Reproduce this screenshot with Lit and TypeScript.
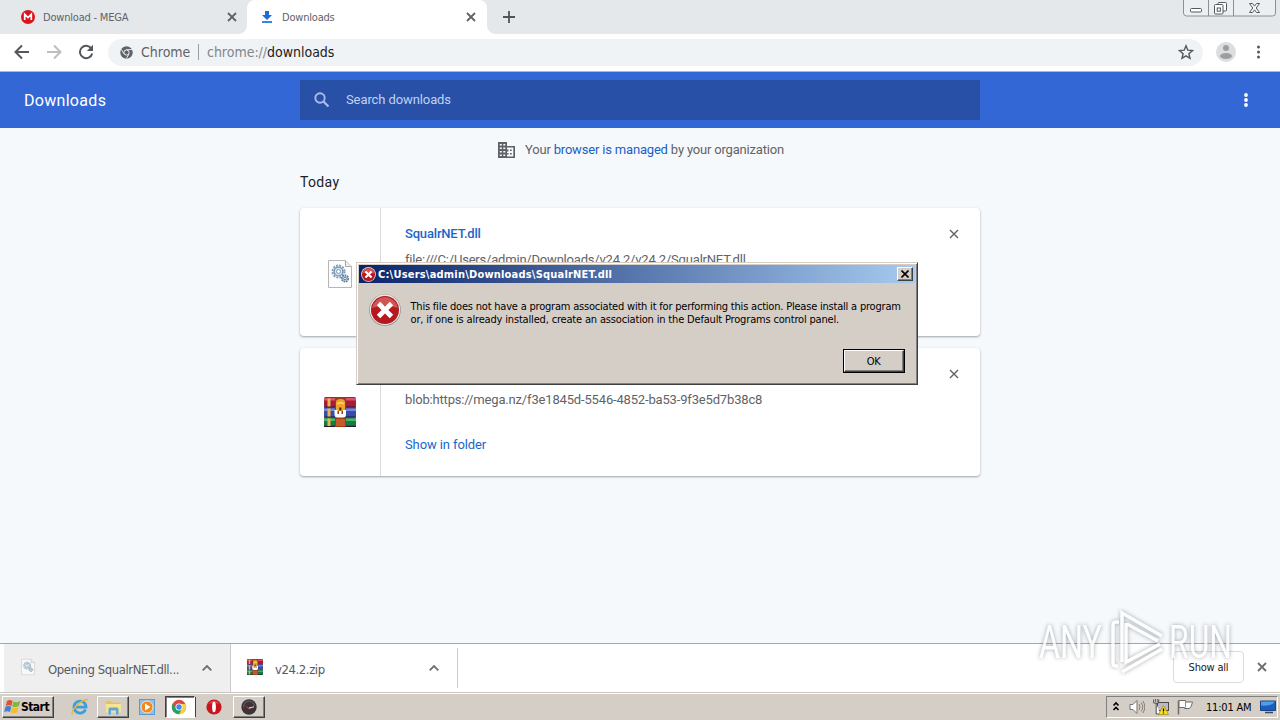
import { LitElement, html, svg, css, nothing } from 'lit';
import { customElement, property } from 'lit/decorators.js';

// WinRAR style stack of books, shared by the list and the shelf
const rarIcon = svg`
  <rect x="0" y="0" width="32" height="10" rx="1.5" fill="#a81c3a"/>
  <rect x="0" y="1" width="32" height="2.5" fill="#d9536b"/>
  <rect x="0" y="10.5" width="32" height="9.5" rx="1" fill="#3a4ba8"/>
  <rect x="0" y="11.5" width="32" height="2.5" fill="#7488d8"/>
  <rect x="0" y="20.5" width="32" height="9.5" rx="1.5" fill="#187a41"/>
  <rect x="0" y="21.5" width="32" height="2.5" fill="#4bb573"/>
  <path d="M0 10.200h32M0 20.200h32M0 29.300h32" stroke="#2b1730" stroke-width="1.200"/>
  <path d="M3.500 1.500h3v8h-3zM3.500 11.500h3v8h-3zM3.500 21.500h3v7.500h-3z" fill="#e8b64a"/>
  <rect x="11" y="0" width="11" height="30" fill="#9c3b16"/>
  <path d="M12 22h9v7h-9z" fill="#c8592a"/>
  <path d="M12 14V5q0-3 4.500-3t4.500 3v9z" fill="#eda32c"/>
  <path d="M13 7q3.500-2.500 7 0" fill="none" stroke="#fbd776" stroke-width="1.500"/>
  <path d="M10.500 13v4.500q0 3 3 3h5.500q3 0 3-3V13h-3v4h-1.500v-3h-2.500v3h-1.500v-4z" fill="#fff"/>
  <rect x="15.300" y="10.500" width="2" height="3" fill="#402010"/>`;

const dllIcon = svg`
  <path d="M.5.5h17l6 6v21H.5z" fill="#fdfdfd" stroke="#b4b6b8"/>
  <path d="M17.500.5v6h6" fill="#e9ecef" stroke="#a9abad"/>
  <circle cx="10.500" cy="11.500" r="6" fill="none" stroke="#7f9fba" stroke-width="2" stroke-dasharray="2 1.140"/>
  <circle cx="10.500" cy="11.500" r="4.400" fill="#d2e5f2" stroke="#7595b0" stroke-width="1.400"/>
  <circle cx="10.500" cy="11.500" r="2" fill="#fff" stroke="#7c9cb8"/>
  <circle cx="17" cy="18.500" r="3.200" fill="#c3dcec" stroke="#587b9a" stroke-width="1.700" stroke-dasharray="1.600 .8"/>
  <circle cx="17" cy="18.500" r="1.300" fill="#fff" stroke="#557b9b"/>`;

const errorIcon = svg`
  <circle cx="16" cy="16" r="15.800" fill="#8b8b8b"/>
  <circle cx="16" cy="15.700" r="15.200" fill="#f0e9e7"/>
  <circle cx="16" cy="16" r="14" fill="#b5191f"/>
  <path d="M3 14a13.200 13.200 0 0 1 26 0q-13-5-26 0z" fill="#d05654"/>
  <path d="M9.500 9.500l13 13M22.500 9.500l-13 13" stroke="#fff" stroke-width="4.800"/>`;

const closePath = svg`<path d="M1 1l8 8M9 1l-8 8" fill="none" stroke="currentColor"/>`;

@customElement('download-card')
export class DownloadCard extends LitElement {
  static styles = css`
    :host {
      display: flex;
      height: 128px;
      box-sizing: border-box;
      background: #fff;
      border-radius: 4px;
      box-shadow: 0 1px 2px rgba(60, 64, 67, 0.35), 0 1px 3px rgba(60, 64, 67, 0.15);
      font: 13px/20px Roboto, sans-serif;
    }
    .icon {
      width: 80px;
      border-right: 1px solid #d8dadc;
      display: flex;
      align-items: center;
      justify-content: center;
    }
    .icon svg {
      overflow: visible;
    }
    .dll {
      padding-top: 3px;
    }
    .content {
      flex: 1;
      padding: 16px 0 0 24px;
      display: flex;
      flex-direction: column;
      align-items: flex-start;
    }
    .name {
      color: #1a66c9;
      font-weight: 500;
      letter-spacing: -0.18px;
    }
    .url {
      color: #5f6368;
      margin-top: 6px;
      letter-spacing: -0.2px;
    }
    .zip + .content .url {
      letter-spacing: -0.165px;
    }
    .action {
      color: #1a66c9;
      margin-top: 25px;
      letter-spacing: -0.1px;
    }
    .close {
      width: 10px;
      height: 10px;
      margin: 21px 21px 0 0;
      color: #5f6368;
      stroke-width: 1.4;
    }
  `;

  @property() kind = 'dll';
  @property() name = '';
  @property() url = '';
  @property() action = '';

  render() {
    return html`
      <div class="icon ${this.kind}">
        ${this.kind === 'dll'
          ? html`<svg width="24" height="28" viewBox="0 0 24 28">${dllIcon}</svg>`
          : html`<svg width="32" height="30" viewBox="0 0 32 30">${rarIcon}</svg>`}
      </div>
      <div class="content">
        <span class="name">${this.name}</span>
        <span class="url">${this.url}</span>
        ${this.action ? html`<span class="action">${this.action}</span>` : nothing}
      </div>
      <svg class="close" viewBox="0 0 10 10">${closePath}</svg>
    `;
  }
}

@customElement('error-dialog')
export class ErrorDialog extends LitElement {
  static styles = css`
    :host {
      display: block;
      box-sizing: border-box;
      width: 562px;
      height: 123px;
      background: #d5cec7;
      border: 1px solid;
      border-color: #d5cec7 #404040 #404040 #d5cec7;
      box-shadow: inset 1px 1px #fff, inset -1px -1px #808080;
      padding: 2px;
      font: 11px/13px "DejaVu Sans Condensed", "DejaVu Sans", sans-serif;
      font-stretch: condensed;
      color: #000;
    }
    .title {
      height: 18px;
      display: flex;
      align-items: center;
      padding: 0 2px;
      background: linear-gradient(90deg, #0a246a, #a6caf0);
      color: #fff;
      font-weight: bold;
    }
    .title span {
      flex: 1;
      margin-left: 2px;
      letter-spacing: 0.2px;
      white-space: nowrap;
    }
    .title button {
      width: 16px;
      height: 14px;
    }
    button {
      box-sizing: border-box;
      display: flex;
      align-items: center;
      justify-content: center;
      padding: 0;
      background: #d5cec7;
      border: 1px solid;
      border-color: #fff #404040 #404040 #fff;
      box-shadow: inset -1px -1px #808080;
      font: inherit;
    }
    .body {
      display: flex;
      padding: 11px 0 0 10px;
    }
    .message {
      margin: 6px 0 0 9.5px;
      white-space: nowrap;
    }
    .first {
      letter-spacing: -0.205px;
    }
    .second {
      letter-spacing: -0.17px;
    }
    .actions {
      display: flex;
      justify-content: flex-end;
      padding: 23px 10px 0 0;
    }
    .ok {
      border: 1px solid #000;
    }
    .ok button {
      width: 60px;
      height: 22px;
      letter-spacing: -0.4px;
      padding-right: 1px;
    }
  `;

  render() {
    return html`
      <div class="title">
        <svg width="15" height="15" viewBox="0 0 32 32">${errorIcon}</svg>
        <span>C:\\Users\\admin\\Downloads\\SqualrNET.dll</span>
        <button>
          <svg width="8" height="8" viewBox="0 0 8 8"><path d="M.5.5l7 7M7.500.5l-7 7" stroke="#000" stroke-width="1.600"/></svg>
        </button>
      </div>
      <div class="body">
        <svg width="32" height="32" viewBox="0 0 32 32">${errorIcon}</svg>
        <div class="message">
          <div class="first">This file does not have a program associated with it for performing this action. Please install a program</div>
          <div class="second">or, if one is already installed, create an association in the Default Programs control panel.</div>
        </div>
      </div>
      <div class="actions"><div class="ok"><button>OK</button></div></div>
    `;
  }
}

@customElement('task-bar')
export class TaskBar extends LitElement {
  static styles = css`
    :host {
      display: flex;
      align-items: center;
      box-sizing: border-box;
      height: 28px;
      padding: 1px 2px 0;
      background: #d5cec7;
      border-top: 1px solid #c9c5bf;
      box-shadow: inset 0 1px #fff;
      font: 11px/14px "DejaVu Sans Condensed", "DejaVu Sans", sans-serif;
      font-stretch: condensed;
      color: #000;
    }
    .button, .slot {
      box-sizing: border-box;
      height: 22px;
      width: 32px;
      display: flex;
      align-items: center;
      justify-content: center;
    }
    .button {
      border: 1px solid;
      border-color: #fff #404040 #404040 #fff;
      box-shadow: inset -1px -1px #808080;
    }
    .start {
      width: 52px;
      font-weight: bold;
      font-size: 12px;
      letter-spacing: -0.5px;
      margin-right: 9px;
      padding-right: 3px;
    }
    .slot {
      width: 34px;
    }
    .slot.player {
      padding-left: 1px;
    }
    .slot.last {
      width: 37px;
      padding-right: 1px;
    }
    .pressed {
      width: 30px;
      margin-left: 2px;
      padding-right: 2px;
      background: #fff;
      border-color: #404040 #fff #fff #404040;
      box-shadow: inset 1px 1px #808080;
    }
    .grip {
      width: 1px;
      height: 20px;
      background: #404040;
    }
    .tray {
      margin-left: auto;
      box-sizing: border-box;
      width: 172px;
      height: 22px;
      display: flex;
      align-items: center;
      border: 1px solid;
      border-color: #808080 #fff #fff #808080;
      padding-left: 5px;
    }
    .tray span {
      letter-spacing: -0.2px;
      white-space: nowrap;
      width: 46px;
      margin: 1px 8px 0 13px;
    }
    .speaker {
      margin-left: 9px;
    }
    .network {
      margin-left: 8px;
    }
    .flag {
      margin-left: 8px;
    }
  `;

  render() {
    return html`
      <div class="button start">
        <svg width="17" height="16" viewBox="0 0 17 16">
          <path d="M3 2q3-2 5.500 0L7.500 7Q5 5.500 1.800 7z" fill="#e2522a"/>
          <path d="M9.300 2.500q3 1.600 7-.5l-1.500 5q-3 1.800-6.500.5z" fill="#7cb83b"/>
          <path d="M1.500 7.800q3-1.600 5.700 0L6 13Q3.500 11.500.2 13z" fill="#3e7fd0"/>
          <path d="M8 8.200q3 1.500 6.500 0l-1.400 5.300q-3 1.600-6.500 0z" fill="#f4bd2c"/>
        </svg>
        Start
      </div>
      <div class="slot">
        <svg width="18" height="18" viewBox="0 0 18 18">
          <path d="M14.500 11.500A6 6 0 1 1 15 9.200H5" fill="none" stroke="#3c9fdc" stroke-width="2.800"/>
          <path d="M1.500 16.500C-1 13 10 1 17 1.500q-2 0-4 1" fill="none" stroke="#e9b83a" stroke-width="1.400"/>
        </svg>
      </div>
      <div class="button">
        <svg width="17" height="16" viewBox="0 0 17 16">
          <path d="M1 2h5l1 1.500h8.500V13H1z" fill="#e6c25c"/>
          <path d="M1 5h15v8.500H1z" fill="#f8e38f"/>
          <path d="M3.500 15.500V10q0-1.500 1.500-1.500h7q1.500 0 1.500 1.500v5.500h-2.500V11.500H6v4z" fill="#5aa9d8"/>
        </svg>
      </div>
      <div class="slot player">
        <svg width="16" height="16" viewBox="0 0 16 16">
          <rect x=".5" y=".5" width="15" height="15" fill="#8cc0ea" stroke="#5a9bd2"/>
          <circle cx="8" cy="8" r="6" fill="#f08a1c" stroke="#fde3c0"/>
          <path d="M6 4.500v7L11.500 8z" fill="#fff"/>
        </svg>
      </div>
      <div class="button pressed">
        <svg width="16" height="16" viewBox="0 0 16 16">
          <circle cx="8" cy="8" r="7.200" fill="#dd4b3e"/>
          <path d="M1.800 4.400A7.200 7.200 0 0 0 8 15.200L11 9.700 5 9.700z" fill="#1fa463"/>
          <path d="M14.500 5A7.200 7.200 0 0 1 8 15.200L11.300 9 10 5z" fill="#ffcd40"/>
          <circle cx="8" cy="8" r="3.500" fill="#fff"/>
          <circle cx="8" cy="8" r="2.700" fill="#4285f4"/>
        </svg>
      </div>
      <div class="grip"></div>
      <div class="slot last">
        <svg width="16" height="16" viewBox="0 0 16 16">
          <ellipse cx="8" cy="8" rx="7.600" ry="7.600" fill="#c8161d"/>
          <path d="M2 5q6-7 12 0-6-2-12 0z" fill="#e04a47"/>
          <ellipse cx="8" cy="8" rx="1.900" ry="5.300" fill="#fff"/>
        </svg>
      </div>
      <div class="button">
        <svg width="16" height="16" viewBox="0 0 16 16">
          <circle cx="8" cy="8" r="7.700" fill="#3a3438"/>
          <path d="M2.500 8.500A5.500 5.500 0 0 1 13.500 7" fill="none" stroke="#5f585e" stroke-width="1.300"/>
          <path d="M3 6l5 3 5-1.200-5 2.400z" fill="#e34a3e"/>
          <path d="M8 9l5-1.200" stroke="#ddd"/>
        </svg>
      </div>
      <div class="tray">
        <svg width="8" height="13" viewBox="0 0 8 13"><path d="M1.500 4.500L4 2l2.500 2.500M1.500 9L4 6.500 6.500 9" fill="none" stroke="#000" stroke-width="1.600"/></svg>
        <svg class="speaker" width="16" height="16" viewBox="0 0 16 16">
          <path d="M1 5.500h3L8 1.500v13l-4-4H1z" fill="#fff" stroke="#77736e"/>
          <path d="M10 5q2 3 0 6M12 3.500q3.500 4.500 0 9M14 2q3.500 6 0 12" fill="none" stroke="#85817b"/>
        </svg>
        <svg class="network" width="16" height="16" viewBox="0 0 16 16">
          <rect x="4.500" y="3.500" width="11" height="8" fill="#b9bbc0" stroke="#494949"/>
          <path d="M.7.5v3.500h5V.5M2.300 0v3M4.200 0v3M3.200 4v11h4" fill="#fff" stroke="#494949"/>
          <path d="M10.500 6.500l5 9h-10z" fill="#ffe21f" stroke="#9b8720" stroke-width=".7"/>
          <path d="M10.500 9.500v3M10.500 13.500v1" stroke="#000" stroke-width="1.300"/>
        </svg>
        <svg class="flag" width="16" height="16" viewBox="0 0 16 16">
          <path d="M1.500 15.500v-14" stroke="#6f6b66" stroke-width="1.500"/>
          <path d="M2 1.500h6.500v1.500h7q-1 5-3 6.500h-5V8.500H2z" fill="#fff" stroke="#6f6b66"/>
          <path d="M8.500 2v6.500" stroke="#8f8b86"/>
        </svg>
        <span>11:01 AM</span>
        <svg width="16" height="14" viewBox="0 0 16 14">
          <path d="M.5 1h15v9.500H.5z" fill="#1a5fc0" stroke="#174382"/>
          <path d="M1 1.500h14q-3 5-14 4z" fill="#4f9de6"/>
          <path d="M5 12.500h8" stroke="#39485c" stroke-width="1.500"/>
        </svg>
      </div>
    `;
  }
}

@customElement('app-root')
export class AppRoot extends LitElement {
  static styles = css`
    :host {
      display: flex;
      flex-direction: column;
      position: relative;
      width: 1280px;
      height: 720px;
      overflow: hidden;
      background: #f6f9fc;
      font-family: Roboto, sans-serif;
      --ui-font: "DejaVu Sans Condensed", "DejaVu Sans", sans-serif;
    }
    svg {
      flex: none;
    }
    .tabs {
      height: 34px;
      flex: none;
      display: flex;
      background: #e4e8eb;
      font: 11px/14px var(--ui-font);
      font-stretch: condensed;
      color: #5f6368;
      letter-spacing: -0.2px;
    }
    .tab {
      box-sizing: border-box;
      display: flex;
      align-items: center;
      height: 34px;
      width: 240px;
      padding: 0 11px 0 13px;
    }
    .tab span {
      flex: 1;
      margin-left: 8px;
      padding-top: 2px;
    }
    .tab.first {
      width: 247px;
      padding: 0 10px 0 21px;
    }
    .tab.active {
      position: relative;
      background: #fff;
      border-radius: 8px 8px 0 0;
    }
    .tab.active::before, .tab.active::after {
      content: '';
      position: absolute;
      bottom: 0;
      width: 8px;
      height: 8px;
    }
    .tab.active::before {
      left: -8px;
      background: radial-gradient(circle at 0 0, transparent 7.5px, #fff 8px);
    }
    .tab.active::after {
      right: -8px;
      background: radial-gradient(circle at 100% 0, transparent 7.5px, #fff 8px);
    }
    .tab .x {
      color: #5f6368;
      stroke-width: 1.8;
    }
    .new {
      align-self: center;
      margin-left: 16px;
    }
    .window {
      margin: 0 4px 0 auto;
    }
    .toolbar {
      box-sizing: border-box;
      height: 38px;
      flex: none;
      display: flex;
      align-items: center;
      background: #fff;
      border-bottom: 1px solid #aeb9cc;
      padding: 0 14px 2px;
      font: 14px/18px var(--ui-font);
      font-stretch: condensed;
    }
    .nav {
      display: flex;
      gap: 16px;
      width: 94px;
    }
    .omnibox {
      box-sizing: border-box;
      flex: none;
      width: 1095px;
      height: 27px;
      margin-top: 1px;
      border-radius: 14px;
      background: #f0f3f5;
      display: flex;
      align-items: center;
      padding: 0 9px 0 12px;
      color: #5f6368;
    }
    .omnibox .origin {
      margin-left: 8px;
      width: 49px;
    }
    .omnibox .bar {
      width: 1px;
      height: 16px;
      background: #9a9da1;
      margin: 0 8px;
    }
    .omnibox .address {
      flex: 1;
      color: #80868b;
      letter-spacing: -0.02px;
    }
    .address b {
      font-weight: normal;
      color: #202124;
    }
    .avatar {
      margin-left: 13px;
    }
    .menu {
      margin-left: 20px;
    }
    header {
      box-sizing: border-box;
      height: 56px;
      flex: none;
      display: flex;
      align-items: center;
      background: #3367d6;
      padding: 0 32px 0 24px;
      color: #fff;
    }
    header h1 {
      margin: 0;
      width: 276px;
      padding-top: 2px;
      font: 400 16px/20px Roboto, sans-serif;
      letter-spacing: 0.3px;
    }
    .search {
      box-sizing: border-box;
      width: 680px;
      height: 40px;
      display: flex;
      align-items: center;
      gap: 16px;
      padding-left: 14px;
      background: #2850a7;
      color: #c0d0f2;
      font-size: 13px;
      letter-spacing: -0.1px;
    }
    .search span {
      padding-bottom: 2px;
    }
    header .dots {
      margin-left: auto;
    }
    main {
      flex: 1;
      width: 680px;
      margin: 0 auto;
    }
    .managed {
      display: flex;
      align-items: center;
      justify-content: center;
      gap: 10px;
      height: 44px;
      padding-left: 2px;
      color: #5f6368;
      font-size: 13px;
      letter-spacing: -0.18px;
    }
    .managed span {
      padding-bottom: 2px;
    }
    .managed a {
      color: #1a5fc4;
    }
    h2 {
      margin: 0;
      padding-bottom: 16px;
      font: 400 14px/20px Roboto, sans-serif;
      letter-spacing: 0.35px;
      color: #202124;
    }
    .list {
      display: flex;
      flex-direction: column;
      gap: 12px;
    }
    .shelf {
      box-sizing: border-box;
      height: 49px;
      flex: none;
      display: flex;
      align-items: center;
      background: #fff;
      border-top: 1px solid #a5a7aa;
      padding-left: 4px;
      font: 13px/16px var(--ui-font);
      font-stretch: condensed;
      color: #555a60;
    }
    .item {
      box-sizing: border-box;
      width: 227px;
      height: 40px;
      display: flex;
      align-items: center;
      padding: 2px 18px 0 16px;
      border-right: 1px solid #c8cacc;
    }
    .item span {
      flex: 1;
      margin-left: 12px;
      padding-top: 2px;
      letter-spacing: -0.42px;
      white-space: nowrap;
    }
    .item.opening {
      height: 48px;
      background: #efefef;
    }
    .item svg:first-child {
      margin-bottom: 5px;
    }
    .item svg:last-child {
      margin-bottom: 3px;
    }
    .file {
      opacity: 0.7;
    }
    .all {
      box-sizing: border-box;
      width: 71px;
      height: 32px;
      margin: 0 0 2px auto;
      border: 1px solid #dadce0;
      border-radius: 4px;
      display: flex;
      align-items: center;
      justify-content: center;
      padding-top: 2px;
      font-size: 11px;
      letter-spacing: -0.2px;
      color: #202124;
    }
    .shelf .x {
      margin: 0 13px 2px;
      color: #6b6f73;
      stroke-width: 1.8;
    }
    error-dialog {
      position: absolute;
      left: 356px;
      top: 262px;
    }
    .watermark {
      position: absolute;
      left: 1034px;
      top: 604px;
      overflow: visible;
      filter: drop-shadow(0 0 2px rgba(80, 85, 90, 0.7));
      opacity: 0.75;
      font: 400 47px Roboto, sans-serif;
    }
  `;

  render() {
    return html`
      <div class="tabs">
        <div class="tab first">
          <svg width="14" height="14" viewBox="0 0 14 14">
            <circle cx="7" cy="7" r="7" fill="#d9141c"/>
            <path d="M3.700 10V4.300L7 7.600l3.300-3.300V10" fill="none" stroke="#fff" stroke-width="1.700"/>
          </svg>
          <span>Download - MEGA</span>
          <svg class="x" width="10" height="10" viewBox="0 0 10 10">${closePath}</svg>
        </div>
        <div class="tab active">
          <svg width="14" height="14" viewBox="0 0 14 14">
            <path d="M5 1h4v4h3l-5 5-5-5h3z" fill="#1b6ddc"/>
            <path d="M2 12h10" stroke="#1b6ddc" stroke-width="1.700"/>
          </svg>
          <span>Downloads</span>
          <svg class="x" width="10" height="10" viewBox="0 0 10 10">${closePath}</svg>
        </div>
        <svg class="new" width="12" height="12" viewBox="0 0 12 12"><path d="M6 0v12M0 6h12" stroke="#505458" stroke-width="1.800"/></svg>
        <svg class="window" width="93" height="18" viewBox="0 0 93 18">
          <path d="M.5 0v13q0 3 3 3h86q3 0 3-3V0M25.500 0v16M50.500 0v16" fill="#eceff2" stroke="#8b9095"/>
          <rect x="7.500" y="8.500" width="11" height="3.500" rx="1" fill="#fff" stroke="#55595e"/>
          <rect x="35" y="2.500" width="8.500" height="8.500" rx="1" fill="#fff" stroke="#55595e"/>
          <rect x="31.500" y="4.500" width="8.500" height="9.500" rx="1" fill="#fff" stroke="#55595e"/>
          <rect x="34.200" y="8" width="3.200" height="3.200" fill="none" stroke="#55595e"/>
          <path d="M66.500 3.500h3l2 2.700 2-2.700h3l-3.300 4.500 3.300 4.500h-3l-2-2.700-2 2.700h-3l3.300-4.500z" fill="#fff" stroke="#55595e"/>
        </svg>
      </div>

      <div class="toolbar">
        <div class="nav">
          <svg width="16" height="16" viewBox="0 0 16 16"><path d="M15 8H2M8 1.500L1.500 8 8 14.500" fill="none" stroke="#54585c" stroke-width="2"/></svg>
          <svg width="16" height="16" viewBox="0 0 16 16"><path d="M1 8h13M8 1.500L14.500 8 8 14.500" fill="none" stroke="#bcbec0" stroke-width="2"/></svg>
          <svg width="16" height="16" viewBox="0 0 16 16">
            <path d="M13.300 4.500A6.200 6.200 0 1 0 14.200 9.500" fill="none" stroke="#54585c" stroke-width="2"/>
            <path d="M15 .8V7H8.800z" fill="#54585c"/>
          </svg>
        </div>
        <div class="omnibox">
          <svg width="13" height="13" viewBox="0 0 13 13">
            <circle cx="6.500" cy="6.500" r="6.200" fill="#5f6368"/>
            <circle cx="6.500" cy="6.500" r="2.600" fill="#5f6368" stroke="#f0f3f5"/>
            <path d="M6.500 3.600h5.500M4 8L1.300 3.300M9 8l-2.700 4.600" stroke="#f0f3f5" stroke-width=".9"/>
          </svg>
          <span class="origin">Chrome</span>
          <span class="bar"></span>
          <span class="address">chrome://<b>downloads</b></span>
          <svg width="16" height="16" viewBox="0 0 16 16"><path d="M8 1.800l1.800 4.400 4.700.4-3.600 3.100 1.100 4.600L8 11.800l-4 2.500 1.100-4.600L1.500 6.600l4.700-.4z" fill="none" stroke="#54585c" stroke-width="1.400"/></svg>
        </div>
        <svg class="avatar" width="20" height="20" viewBox="0 0 20 20">
          <circle cx="10" cy="10" r="10" fill="#dcdddf"/>
          <circle cx="10" cy="6" r="3" fill="#9c9ea0"/>
          <ellipse cx="10" cy="14" rx="6" ry="3" fill="#9c9ea0"/>
        </svg>
        <svg class="menu" width="4" height="14" viewBox="0 0 4 14"><circle cx="2.500" cy="2" r="1.500" fill="#54585c"/><circle cx="2.500" cy="7" r="1.500" fill="#54585c"/><circle cx="2.500" cy="12" r="1.500" fill="#54585c"/></svg>
      </div>

      <header>
        <h1>Downloads</h1>
        <div class="search">
          <svg width="16" height="16" viewBox="0 0 16 16"><circle cx="6" cy="6" r="4.700" fill="none" stroke="#a9bdea" stroke-width="1.900"/><path d="M9.500 9.500l5 5" stroke="#a9bdea" stroke-width="2.200"/></svg>
          <span>Search downloads</span>
        </div>
        <svg class="dots" width="4" height="14" viewBox="0 0 4 14"><circle cx="2" cy="2" r="1.900" fill="#fff"/><circle cx="2" cy="7" r="1.900" fill="#fff"/><circle cx="2" cy="12" r="1.900" fill="#fff"/></svg>
      </header>

      <main>
        <div class="managed">
          <svg width="17" height="16" viewBox="0 0 17 16">
            <path d="M0 0h9v4h8v12H0z" fill="#5f6368"/>
            <path d="M1.800 2h2v1.500h-2zM5.300 2h2v1.500h-2zM1.800 5.500h2V7h-2zM5.300 5.500h2V7h-2zM1.800 9h2v1.500h-2zM5.300 9h2v1.500h-2zM1.800 12.500h2V14h-2zM5.300 12.500h2V14h-2zM9 5.500h6.300v9H9v-2h1.500V11H9V9.500h1.500V7.500H9z" fill="#f6f9fc"/>
            <path d="M12 7.500h1.700V9H12zM12 11h1.700v1.500H12z" fill="#5f6368"/>
          </svg>
          <span>Your <a>browser is managed</a> by your organization</span>
        </div>
        <h2>Today</h2>
        <div class="list">
          <download-card kind="dll" name="SqualrNET.dll" url="file:///C:/Users/admin/Downloads/v24.2/v24.2/SqualrNET.dll"></download-card>
          <download-card kind="zip" name="v24.2.zip" url="blob:https://mega.nz/f3e1845d-5546-4852-ba53-9f3e5d7b38c8" action="Show in folder"></download-card>
        </div>
      </main>

      <div class="shelf">
        <div class="item opening">
          <svg class="file" width="16" height="18" viewBox="-2 0 28 28">${dllIcon}</svg>
          <span>Opening SqualrNET.dll...</span>
          <svg width="10" height="6" viewBox="0 0 10 6"><path d="M.7 5.300L5 1l4.300 4.300" fill="none" stroke="#6b6f73" stroke-width="1.800"/></svg>
        </div>
        <div class="item">
          <svg width="16" height="16" viewBox="0 0 32 30" preserveAspectRatio="none">${rarIcon}</svg>
          <span>v24.2.zip</span>
          <svg width="10" height="6" viewBox="0 0 10 6"><path d="M.7 5.300L5 1l4.300 4.300" fill="none" stroke="#6b6f73" stroke-width="1.800"/></svg>
        </div>
        <div class="all">Show all</div>
        <svg class="x" width="10" height="10" viewBox="0 0 10 10">${closePath}</svg>
      </div>

      <task-bar></task-bar>

      <error-dialog></error-dialog>

      <svg class="watermark" width="204" height="74" viewBox="0 0 204 74">
        <text x="5" y="54" textLength="63" lengthAdjust="spacingAndGlyphs" fill="#fff">ANY</text>
        <path d="M85 18h-3q-3 0-3 3v38q0 3 3 3h2M88 58V9l40 23M92 19v39l34-18M93 20l31 17M88 68l40-23" fill="none" stroke="#fff" stroke-width="3.500"/>
        <text x="135" y="54" textLength="63" lengthAdjust="spacingAndGlyphs" fill="#fff">RUN</text>
      </svg>
    `;
  }
}
